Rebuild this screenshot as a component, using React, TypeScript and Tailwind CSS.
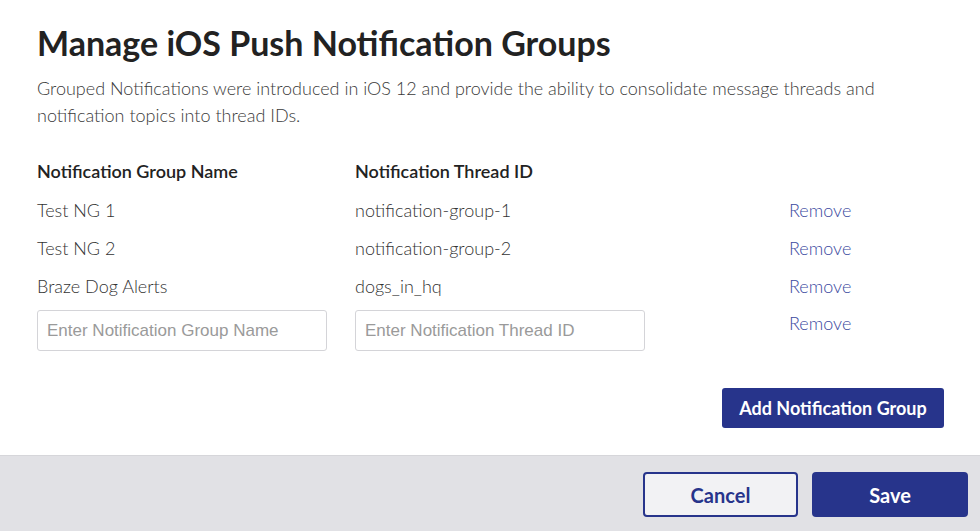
import React from 'react';

const rows = [
  { name: 'Test NG 1', id: 'notification-group-1' },
  { name: 'Test NG 2', id: 'notification-group-2' },
  { name: 'Braze Dog Alerts', id: 'dogs_in_hq' },
];

export default function App() {
  return (
    <div className="w-[980px] h-[531px] bg-white flex flex-col font-['Lato',sans-serif] text-[#333]">
      <div className="h-[455px] px-[37px] pt-[23px]">
        <h1 className="text-[34px] leading-[40px] font-bold text-[#222]">Manage iOS Push Notification Groups</h1>
        <p className="mt-[12px] text-[18px] leading-[27px] text-[#3a3a3a] font-light">
          Grouped Notifications were introduced in iOS 12 and provide the ability to consolidate message threads and notification topics into thread IDs.
        </p>

        <div className="mt-[30px] flex text-[18px] leading-[24px] font-semibold text-[#222]">
          <div className="w-[318px]">Notification Group Name</div>
          <div>Notification Thread ID</div>
        </div>

        <div className="mt-[15px] flex flex-col gap-[14px] text-[18px] leading-[24px] font-light text-[#333]">
          {rows.map(r => (
            <div key={r.id} className="flex">
              <div className="w-[318px]">{r.name}</div>
              <div className="w-[434px]">{r.id}</div>
              <a className="text-[#3b4aa0] cursor-pointer">Remove</a>
            </div>
          ))}
        </div>

        <div className="mt-[12px] flex items-start">
          <input
            className="w-[290px] h-[41px] border border-[#d4d4d8] rounded-[3px] px-[9px] text-[17px] font-['Liberation_Sans',sans-serif] placeholder:text-[#9a9a9a] outline-none"
            placeholder="Enter Notification Group Name"
          />
          <input
            className="ml-[28px] w-[290px] h-[41px] border border-[#d4d4d8] rounded-[3px] px-[9px] text-[17px] font-['Liberation_Sans',sans-serif] placeholder:text-[#9a9a9a] outline-none"
            placeholder="Enter Notification Thread ID"
          />
          <a className="ml-[144px] mt-[1px] text-[18px] leading-[24px] font-light text-[#3b4aa0] cursor-pointer">Remove</a>
        </div>

        <div className="mt-[37px] flex justify-end">
          <button className="w-[222px] h-[40px] rounded-[3px] bg-[#27348b] text-white text-[18px] font-bold -mr-[1px]">
            Add Notification Group
          </button>
        </div>
      </div>

      <div className="flex-1 bg-[#e1e1e5] border-t border-[#d6d6da] flex items-center justify-end gap-[14px] px-[12px] pt-[2px]">
        <button className="w-[155px] h-[45px] rounded-[4px] border-2 border-[#27348b] bg-[#f2f2f4] text-[#27348b] text-[20px] font-bold">
          Cancel
        </button>
        <button className="w-[156px] h-[45px] rounded-[4px] bg-[#27348b] text-white text-[20px] font-bold">
          Save
        </button>
      </div>
    </div>
  );
}
